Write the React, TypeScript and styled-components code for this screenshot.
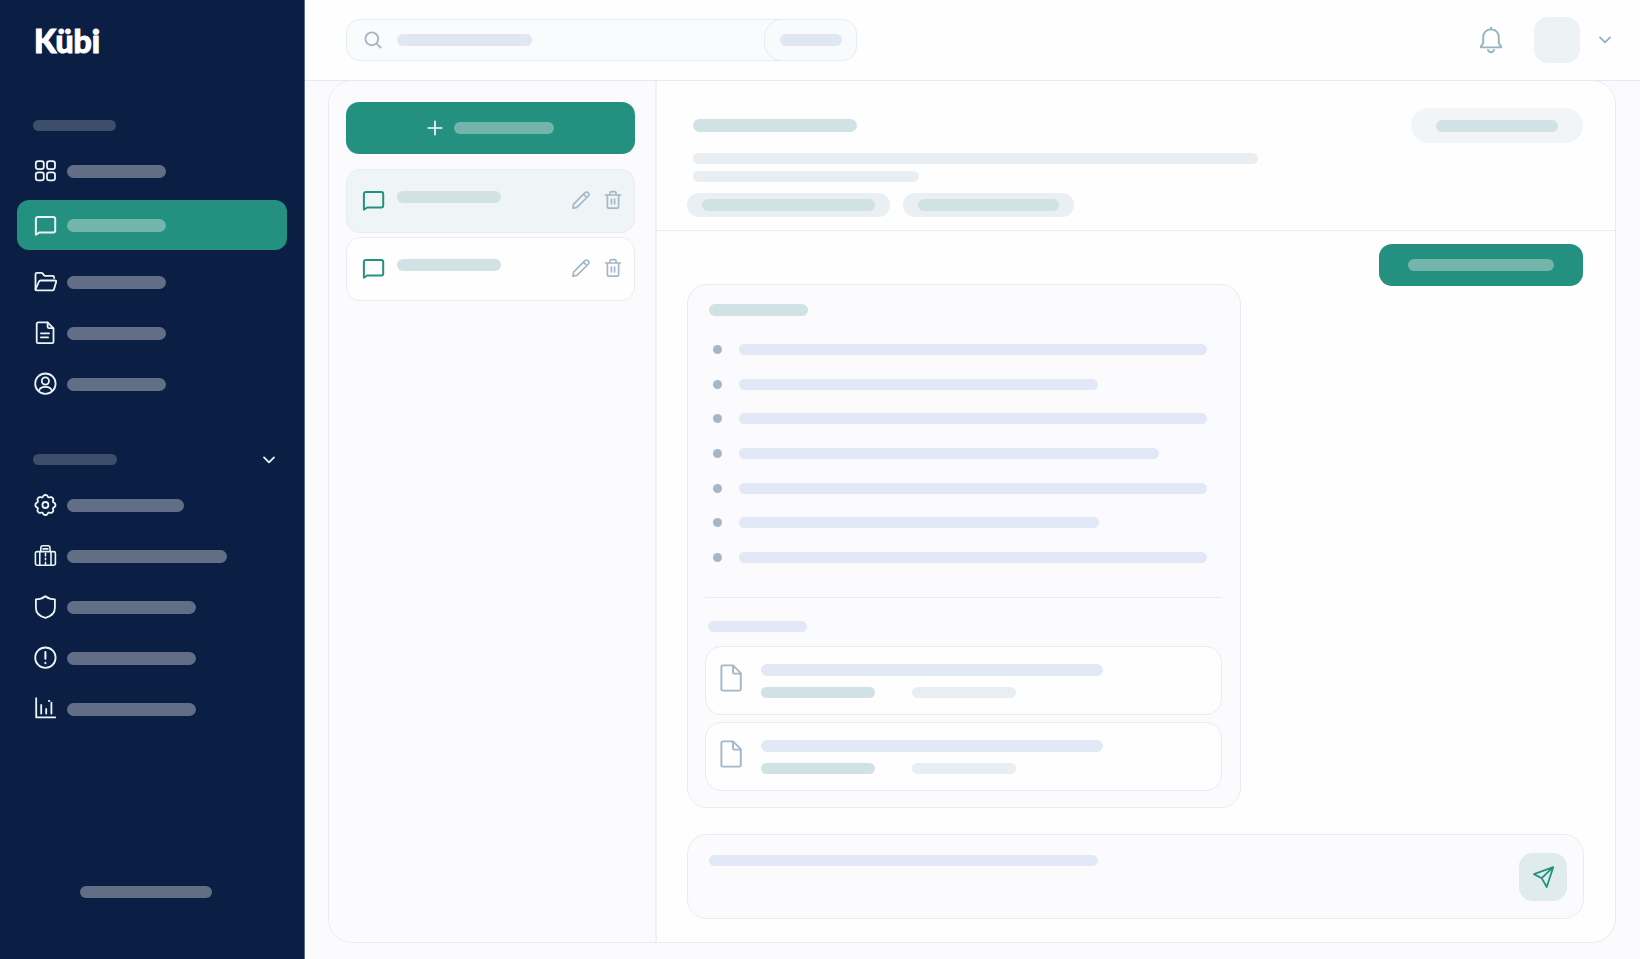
import React from "react";
import styled, { createGlobalStyle, css } from "styled-components";

const color = {
  navy: "#0b1f45",
  navyEdge: "#5f6c88",
  green: "#249180",
  page: "#fbfbfd",
  surface: "#fefefe",
  line: "#e6edf2",
  iconMuted: "#a3b7c8",
  iconLight: "#eaf5f5",
};

const tones = {
  section: "#3c4e69",
  nav: "#626d86",
  onGreen: "#73b5aa",
  teal: "#d0e2e4",
  mist: "#e9eef3",
  blue: "#e2e8f6",
  search: "#dfe7f3",
};

const GlobalStyle = createGlobalStyle`
  *, *::before, *::after { box-sizing: border-box; }
  body {
    margin: 0;
    background: ${color.page};
    font-family: Lato, "Open Sans", sans-serif;
  }
  button, input, textarea { font: inherit; }
  ul, h1, h2, p { margin: 0; padding: 0; list-style: none; }
`;

/* ---------- shared parts ---------- */

const Bar = styled.span<{ $w: number; $h?: number; $tone: keyof typeof tones }>`
  display: block;
  flex: 0 1 ${(p) => p.$w}px;
  width: ${(p) => p.$w}px;
  max-width: 100%;
  height: ${(p) => p.$h ?? 12}px;
  border-radius: 7px;
  background: ${(p) => tones[p.$tone]};
`;

const Svg = styled.svg`
  display: block;
  flex: none;
  fill: none;
  stroke: currentColor;
  stroke-linecap: round;
  stroke-linejoin: round;
`;

type IconProps = { children: React.ReactNode; w?: number; h?: number; stroke?: number };

const Icon = ({ children, w = 24, h = 24, stroke = 1.8 }: IconProps) => (
  <Svg width={w} height={h} viewBox={`0 0 ${w} ${h}`} strokeWidth={stroke} aria-hidden="true">
    {children}
  </Svg>
);

/* ---------- icons ---------- */

const GridIcon = () => (
  <Icon>
    <rect x="2.8" y="2.2" width="8" height="8" rx="2.4" />
    <rect x="14" y="2.2" width="8" height="8" rx="2.4" />
    <rect x="2.8" y="13.4" width="8" height="8" rx="2.4" />
    <rect x="14" y="13.4" width="8" height="8" rx="2.4" />
  </Icon>
);

const ChatIcon = () => (
  <Icon stroke={2}>
    <path d="M2.9 21.8V5.9a2 2 0 0 1 2-2h15.3a2 2 0 0 1 2 2v11.6a2 2 0 0 1-2 2H6.2l-3.3 2.3Z" />
  </Icon>
);

const FolderIcon = () => (
  <Icon>
    <path d="M2.5 19.4V4.2a1.4 1.4 0 0 1 1.4-1.4h4.3a2 2 0 0 1 1.6.8l1.3 1.8a1 1 0 0 0 .8.4h7.8a1.4 1.4 0 0 1 1.4 1.4v.9" />
    <path d="M2.5 19.4 6 11.5a1.8 1.8 0 0 1 1.6-1h14.6a1 1 0 0 1 1 1.3l-2.3 7.6a1.4 1.4 0 0 1-1.3 1H3.4a1 1 0 0 1-.9-1Z" />
  </Icon>
);

const DocIcon = () => (
  <Icon>
    <path d="M14.6 1.4H5.1a1.4 1.4 0 0 0-1.4 1.4v18a1.4 1.4 0 0 0 1.4 1.4h14a1.4 1.4 0 0 0 1.4-1.4V7.3Z" />
    <path d="M14.6 1.6v4.2a1.4 1.4 0 0 0 1.4 1.4h4.3M7.9 12.3h8.2M7.9 16.4h7.2" />
  </Icon>
);

const UserIcon = () => (
  <Icon>
    <circle cx="12.4" cy="11.7" r="10.2" />
    <circle cx="12.4" cy="9" r="3.6" />
    <path d="M5.8 19.2c.6-3 3-4.4 6.6-4.4s6 1.4 6.6 4.4" />
  </Icon>
);

const gearOutline = Array.from({ length: 128 }, (_, i) => {
  const a = (i / 128) * Math.PI * 2;
  const r = 9.3 + 0.9 * Math.cos(8 * a) - 0.2 * Math.cos(16 * a);
  return `${(12.4 + r * Math.cos(a)).toFixed(2)},${(12 + r * Math.sin(a)).toFixed(2)}`;
}).join(" ");

const GearIcon = () => (
  <Icon>
    <polygon points={gearOutline} />
    <circle cx="12.4" cy="12" r="3" />
  </Icon>
);

const BuildingIcon = () => (
  <Icon stroke={1.6}>
    <path d="M4 7.600h16.800a1.600 1.600 0 0 1 1.600 1.600v10.400a1.600 1.600 0 0 1-1.600 1.600H4a1.600 1.600 0 0 1-1.600-1.600V9.200A1.600 1.600 0 0 1 4 7.600Z" />
    <path d="M7.800 7.400V3.900a2.200 2.200 0 0 1 2.200-2.200h4.800A2.200 2.200 0 0 1 17 3.900v3.500M10 4.900h4.800" />
    <path d="M6.800 8v13M18 8v13M12.500 9.200v2.800M12.500 14.400v1.400M12.500 18.400v2.400" />
  </Icon>
);

const ShieldIcon = () => (
  <Icon>
    <path d="M12.400 1.300c2.400 1.900 5.800 3 9.500 3v8.500c0 5-3.900 8.600-9.500 10-5.600-1.400-9.500-5-9.500-10V4.300c3.700 0 7.100-1.100 9.500-3Z" />
  </Icon>
);

const AlertIcon = () => (
  <Icon>
    <circle cx="12.400" cy="11.700" r="10.200" />
    <path d="M12.400 6v6.800M12.400 16.700v.5" strokeWidth="2" />
  </Icon>
);

const ChartIcon = () => (
  <Icon>
    <path d="M3.200 1.200v19.200h19M8.200 8v8.600M13.200 12v4.600M18.400 5.600v11M15.800 3.900h.6" />
  </Icon>
);

const ChevronIcon = () => (
  <Icon w={14} h={10} stroke={1.8}>
    <path d="m2 2.400 5 5 5-5" />
  </Icon>
);

const SearchIcon = () => (
  <Icon w={18} h={18} stroke={1.900}>
    <circle cx="7.800" cy="7.800" r="6.400" />
    <path d="m12.600 12.600 4 4" />
  </Icon>
);

const BellIcon = () => (
  <Icon w={24} h={28} stroke={1.900}>
    <path d="M12 3.400c-4.700 0-7.800 3.300-7.800 7.600v4.800c0 1-.3 1.800-.9 2.600l-1.300 2a.6.6 0 0 0 .5 1h19a.6.6 0 0 0 .5-1l-1.300-2c-.6-.8-.9-1.600-.9-2.600v-4.800c0-4.300-3.100-7.600-7.800-7.600ZM12 1.600v1.600M9 24c.5 1.400 1.500 2.200 3 2.200s2.500-.8 3-2.200" />
  </Icon>
);

const PlusIcon = () => (
  <Icon w={16} h={16} stroke={1.600}>
    <path d="M8 1.200v13.600M1.200 8h13.600" />
  </Icon>
);

const PencilIcon = () => (
  <Icon w={20} h={20} stroke={1.700}>
    <path d="M2.600 14.200 14 2.600a2 2 0 0 1 2.900 0l.5.500a2 2 0 0 1 0 2.900L5.900 17.400l-4 .8ZM12.600 4.300l3.200 3.200" />
  </Icon>
);

const TrashIcon = () => (
  <Icon w={18} h={20} stroke={1.700}>
    <path d="M1.600 5h14.800M3.400 5.200v11.600a1.400 1.400 0 0 0 1.400 1.400h8.400a1.400 1.400 0 0 0 1.400-1.400V5.200M5.900 4.800V3.300a1.600 1.600 0 0 1 1.600-1.600h3a1.600 1.600 0 0 1 1.600 1.600v1.500M7.400 9v4.800M10.600 9v4.800" />
  </Icon>
);

const FileIcon = () => (
  <Icon w={22} h={28} stroke={1.900}>
    <path d="M13 1.400H2.800a1.400 1.400 0 0 0-1.400 1.400v22.400a1.400 1.400 0 0 0 1.400 1.400h16.600a1.400 1.400 0 0 0 1.400-1.400V9.200Z" />
    <path d="M13 1.600v6.600a1.400 1.400 0 0 0 1.400 1.400h6.200" />
  </Icon>
);

const SendIcon = () => (
  <Icon>
    <path d="M22.200 2.200 3 9.200l7.700 3.900 5 8.900ZM22.200 2.200 10.700 13.100" />
  </Icon>
);

/* ---------- sidebar ---------- */

const Shell = styled.div`
  display: flex;
  min-height: 100vh;
`;

const Sidebar = styled.aside`
  display: flex;
  flex-direction: column;
  flex: none;
  width: 305px;
  padding: 17px 17px 61px;
  background: ${color.navy};
  border-right: 1px solid ${color.navyEdge};
`;

const Logo = styled.a`
  align-self: flex-start;
  margin-left: 17px;
  color: #fff;
  font-size: 32px;
  font-weight: 900;
  line-height: 48px;
  text-decoration: none;
  -webkit-text-stroke: 1px #fff;
  stroke-linejoin: round;
`;

const SectionHead = styled.div`
  display: flex;
  align-items: center;
  justify-content: space-between;
  height: 11px;
  padding: 0 9px 0 16px;
`;

const SectionToggle = styled.button`
  padding: 2px;
  border: 0;
  background: none;
  color: ${color.iconLight};
  cursor: pointer;
`;

const NavSection = styled.nav`
  display: flex;
  flex-direction: column;
  gap: 15px;
  margin-top: 55px;

  & + & {
    margin-top: 45px;
  }
`;

const NavList = styled.ul`
  display: flex;
  flex-direction: column;
  gap: 1px;
`;

const NavItem = styled.li<{ $active?: boolean }>`
  ${(p) =>
    p.$active &&
    css`
      margin: 3px 0 6px;
      border-radius: 12px;
      background: ${color.green};
    `}
`;

const NavLink = styled.a`
  display: flex;
  align-items: center;
  gap: 10px;
  height: 50px;
  padding: 0 16px;
  color: ${color.iconLight};
`;

const SidebarFooter = styled.footer`
  margin-top: auto;
  padding-left: 63px;
`;

/* ---------- top bar ---------- */

const Main = styled.div`
  display: flex;
  flex: 1;
  flex-direction: column;
  min-width: 0;
`;

const TopBar = styled.header`
  position: relative;
  display: flex;
  align-items: center;
  justify-content: space-between;
  height: 81px;
  padding: 0 28px 0 41px;
  background: ${color.surface};
  border-bottom: 1px solid #e3e9f5;
`;

const Search = styled.form`
  display: flex;
  justify-content: space-between;
  flex: 0 1 511px;
  height: 42px;
  border: 1px solid ${color.line};
  border-radius: 14px;
  background: #fafbfc;
  overflow: hidden;
`;

const SearchField = styled.label`
  display: grid;
  flex: 1;
  grid-template-columns: 18px 1fr;
  align-items: center;
  gap: 15px;
  padding-left: 17px;
  color: ${color.iconMuted};

  & > ${Bar}, & > input {
    grid-area: 1 / 2;
  }
`;

const field = css`
  width: 100%;
  min-width: 0;
  border: 0;
  padding: 0;
  outline: 0;
  background: transparent;
  resize: none;
`;

const SearchInput = styled.input`
  ${field}
  height: 40px;
`;

const SearchButton = styled.button`
  display: flex;
  align-items: center;
  justify-content: center;
  width: 93px;
  margin: -1px;
  border: 1px solid ${color.line};
  border-radius: 18px 14px 14px 18px;
  background: #f8fafb;
`;

const Account = styled.div`
  display: flex;
  align-items: center;
`;

const PlainButton = styled.button`
  display: block;
  padding: 0;
  border: 0;
  background: none;
  color: ${color.iconMuted};
  cursor: pointer;
`;

const BellButton = styled(PlainButton)`
  margin-right: 31px;
  color: #92b3c0;
`;

const Profile = styled(PlainButton)`
  display: flex;
  align-items: center;
  gap: 18px;
  color: #8fb1bf;
`;

const Avatar = styled.span`
  width: 46px;
  height: 46px;
  border-radius: 14px;
  background: #edf2f5;
`;

/* ---------- workspace ---------- */

const Panel = styled.main`
  display: flex;
  flex: 1;
  margin: -1px 24px 16px 23px;
  border: 1px solid ${color.line};
  border-radius: 24px;
  background: ${color.surface};
  overflow: hidden;
`;

const Conversations = styled.section`
  flex: none;
  width: 328px;
  padding: 21px 20px 20px 17px;
  border-right: 2px solid #eef2f6;
  background: ${color.page};
`;

const NewChat = styled.button`
  display: flex;
  align-items: center;
  justify-content: center;
  gap: 11px;
  width: 100%;
  height: 52px;
  padding: 0;
  border: 0;
  border-radius: 13px;
  background: ${color.green};
  color: #fff;
`;

const ChatList = styled.ul`
  display: flex;
  flex-direction: column;
  gap: 4px;
  margin-top: 15px;
`;

const ChatItem = styled.li<{ $active?: boolean }>`
  display: flex;
  align-items: center;
  height: 64px;
  padding: 0 12px 2px 14px;
  border: 1px solid ${color.line};
  border-radius: 14px;
  background: ${(p) => (p.$active ? "#eff4f6" : color.surface)};
`;

const ChatLink = styled.a`
  display: flex;
  flex: 1;
  gap: 12px;
  color: ${color.green};

  & > ${Bar} {
    margin-top: 3px;
  }
`;

const ChatActions = styled.div`
  display: flex;
  gap: 13px;
`;

const Chat = styled.section`
  display: flex;
  flex: 1;
  flex-direction: column;
  min-width: 0;
`;

const ChatHead = styled.header`
  display: flex;
  justify-content: space-between;
  height: 150px;
  padding: 27px 32px 0 30px;
  border-bottom: 1px solid ${color.line};
`;

const Intro = styled.div`
  display: flex;
  flex: 1;
  flex-direction: column;
  min-width: 0;
  padding-top: 11px;
`;

const IntroText = styled.div`
  display: flex;
  flex-direction: column;
  gap: 7px;
  padding: 0 0 11px 6px;

  & > ${Bar} {
    flex: none;
  }
  & > ${Bar}:first-child {
    margin-bottom: 14px;
  }
`;

const Tags = styled.div`
  display: flex;
  gap: 13px;
`;

const Pill = styled.button<{ $h: number; $pad: number; $bg: string }>`
  display: flex;
  align-items: center;
  flex: none;
  height: ${(p) => p.$h}px;
  padding: 0 ${(p) => p.$pad}px;
  border: 0;
  border-radius: 18px;
  background: ${(p) => p.$bg};
`;

const Thread = styled.div`
  display: flex;
  align-items: flex-start;
  justify-content: space-between;
  gap: 24px;
  padding: 13px 32px 0 30px;
`;

const Question = styled.div`
  flex: none;
  padding: 15px 29px;
  border-radius: 13px;
  background: ${color.green};
`;

const Answer = styled.article`
  flex: 0 1 554px;
  min-width: 0;
  margin-top: 40px;
  padding: 19px 18px 16px 17px;
  border: 1px solid ${color.line};
  border-radius: 20px;
  background: ${color.page};
`;

const AnswerTitle = styled.h2`
  padding-left: 4px;
`;

const Points = styled.ul`
  display: flex;
  flex-direction: column;
  justify-content: space-between;
  height: 281px;
  padding: 28px 14px 34px 8px;
`;

const Point = styled.li`
  display: flex;
  align-items: center;
  gap: 17px;
  height: 11px;

  &::before {
    content: "";
    flex: none;
    width: 9px;
    height: 9px;
    border-radius: 50%;
    background: ${color.iconMuted};
  }
`;

const Sources = styled.section`
  display: flex;
  flex-direction: column;
  gap: 7px;
  padding-top: 23px;
  border-top: 1px solid ${color.line};
`;

const SourcesTitle = styled.h2`
  padding: 0 0 7px 3px;
`;

const Source = styled.a`
  display: flex;
  gap: 19px;
  height: 69px;
  padding: 17px 14px;
  border: 1px solid ${color.line};
  border-radius: 16px;
  background: ${color.surface};
  color: ${color.iconMuted};
`;

const SourceBody = styled.span`
  flex: 1;
  min-width: 0;
`;

const SourceMeta = styled.span`
  display: flex;
  gap: 37px;
  margin-top: 11px;
`;

const Composer = styled.form`
  display: flex;
  align-items: flex-start;
  gap: 24px;
  height: 85px;
  margin: auto 31px 23px 30px;
  padding: 18px 16px 0 21px;
  border: 1px solid ${color.line};
  border-radius: 20px;
  background: ${color.page};
`;

const MessageField = styled.label`
  display: grid;
  flex: 1;
  padding-top: 2px;

  & > * {
    grid-area: 1 / 1;
  }
`;

const MessageInput = styled.textarea`
  ${field}
  height: 46px;
`;

const SendButton = styled.button`
  display: flex;
  align-items: center;
  justify-content: center;
  flex: none;
  width: 48px;
  height: 48px;
  padding: 0;
  border: 0;
  border-radius: 14px;
  background: #e0ebee;
  color: ${color.green};
`;

/* ---------- data ---------- */

const primaryNav = [
  { id: "dashboard", Glyph: GridIcon },
  { id: "chat", Glyph: ChatIcon, active: true },
  { id: "folders", Glyph: FolderIcon },
  { id: "documents", Glyph: DocIcon },
  { id: "profile", Glyph: UserIcon },
];

const adminNav = [
  { id: "settings", Glyph: GearIcon, width: 117 },
  { id: "organisation", Glyph: BuildingIcon, width: 160 },
  { id: "security", Glyph: ShieldIcon, width: 129 },
  { id: "alerts", Glyph: AlertIcon, width: 129 },
  { id: "reports", Glyph: ChartIcon, width: 129 },
];

const pointWidths = [468, 359, 468, 420, 468, 360, 468];

export default function App() {
  return (
    <Shell>
      <GlobalStyle />
      <Sidebar>
        <Logo href="#home">Kübi</Logo>
        <NavSection aria-label="Main">
          <SectionHead>
            <Bar $w={83} $h={11} $tone="section" />
          </SectionHead>
          <NavList>
            {primaryNav.map(({ id, Glyph, active }) => (
              <NavItem key={id} $active={active}>
                <NavLink href={`#${id}`} aria-label={id} aria-current={active ? "page" : undefined}>
                  <Glyph />
                  <Bar $w={99} $h={13} $tone={active ? "onGreen" : "nav"} />
                </NavLink>
              </NavItem>
            ))}
          </NavList>
        </NavSection>
        <NavSection aria-label="Administration">
          <SectionHead>
            <Bar $w={84} $h={11} $tone="section" />
            <SectionToggle aria-label="Collapse section">
              <ChevronIcon />
            </SectionToggle>
          </SectionHead>
          <NavList>
            {adminNav.map(({ id, Glyph, width }) => (
              <NavItem key={id}>
                <NavLink href={`#${id}`} aria-label={id}>
                  <Glyph />
                  <Bar $w={width} $h={13} $tone="nav" />
                </NavLink>
              </NavItem>
            ))}
          </NavList>
        </NavSection>
        <SidebarFooter>
          <Bar $w={132} $tone="nav" />
        </SidebarFooter>
      </Sidebar>

      <Main>
        <TopBar>
          <Search role="search">
            <SearchField>
              <SearchIcon />
              <Bar $w={135} $tone="search" />
              <SearchInput type="text" aria-label="Search" />
            </SearchField>
            <SearchButton type="button" aria-label="Search scope">
              <Bar $w={62} $tone="search" />
            </SearchButton>
          </Search>
          <Account>
            <BellButton aria-label="Notifications">
              <BellIcon />
            </BellButton>
            <Profile aria-label="Account menu">
              <Avatar />
              <ChevronIcon />
            </Profile>
          </Account>
        </TopBar>

        <Panel>
          <Conversations>
            <NewChat aria-label="New chat">
              <PlusIcon />
              <Bar $w={100} $tone="onGreen" />
            </NewChat>
            <ChatList>
              {[true, false].map((active, i) => (
                <ChatItem key={i} $active={active}>
                  <ChatLink href={`#chat-${i + 1}`} aria-label={`Chat ${i + 1}`}>
                    <ChatIcon />
                    <Bar $w={104} $tone="teal" />
                  </ChatLink>
                  <ChatActions>
                    <PlainButton aria-label="Rename chat">
                      <PencilIcon />
                    </PlainButton>
                    <PlainButton aria-label="Delete chat">
                      <TrashIcon />
                    </PlainButton>
                  </ChatActions>
                </ChatItem>
              ))}
            </ChatList>
          </Conversations>

          <Chat>
            <ChatHead>
              <Intro>
                <IntroText>
                  <Bar $w={164} $h={13} $tone="teal" />
                  <Bar $w={565} $h={11} $tone="mist" />
                  <Bar $w={226} $h={11} $tone="mist" />
                </IntroText>
                <Tags>
                  <Pill $h={24} $pad={15} $bg="#e9eff2" aria-label="First topic">
                    <Bar $w={173} $tone="teal" />
                  </Pill>
                  <Pill $h={24} $pad={15} $bg="#e9eff2" aria-label="Second topic">
                    <Bar $w={141} $tone="teal" />
                  </Pill>
                </Tags>
              </Intro>
              <Pill $h={35} $pad={25} $bg="#f2f5f8" aria-label="Chat options">
                <Bar $w={122} $tone="teal" />
              </Pill>
            </ChatHead>

            <Thread>
              <Answer>
                <AnswerTitle>
                  <Bar $w={99} $tone="teal" />
                </AnswerTitle>
                <Points>
                  {pointWidths.map((width, i) => (
                    <Point key={i}>
                      <Bar $w={width} $h={11} $tone="blue" />
                    </Point>
                  ))}
                </Points>
                <Sources>
                  <SourcesTitle>
                    <Bar $w={99} $h={11} $tone="blue" />
                  </SourcesTitle>
                  {[1, 2].map((n) => (
                    <Source key={n} href={`#source-${n}`} aria-label={`Source ${n}`}>
                      <FileIcon />
                      <SourceBody>
                        <Bar $w={342} $tone="blue" />
                        <SourceMeta>
                          <Bar $w={114} $h={11} $tone="teal" />
                          <Bar $w={104} $h={11} $tone="mist" />
                        </SourceMeta>
                      </SourceBody>
                    </Source>
                  ))}
                </Sources>
              </Answer>
              <Question>
                <Bar $w={146} $tone="onGreen" />
              </Question>
            </Thread>

            <Composer>
              <MessageField>
                <Bar $w={389} $h={11} $tone="blue" />
                <MessageInput aria-label="Message" />
              </MessageField>
              <SendButton type="button" aria-label="Send">
                <SendIcon />
              </SendButton>
            </Composer>
          </Chat>
        </Panel>
      </Main>
    </Shell>
  );
}
